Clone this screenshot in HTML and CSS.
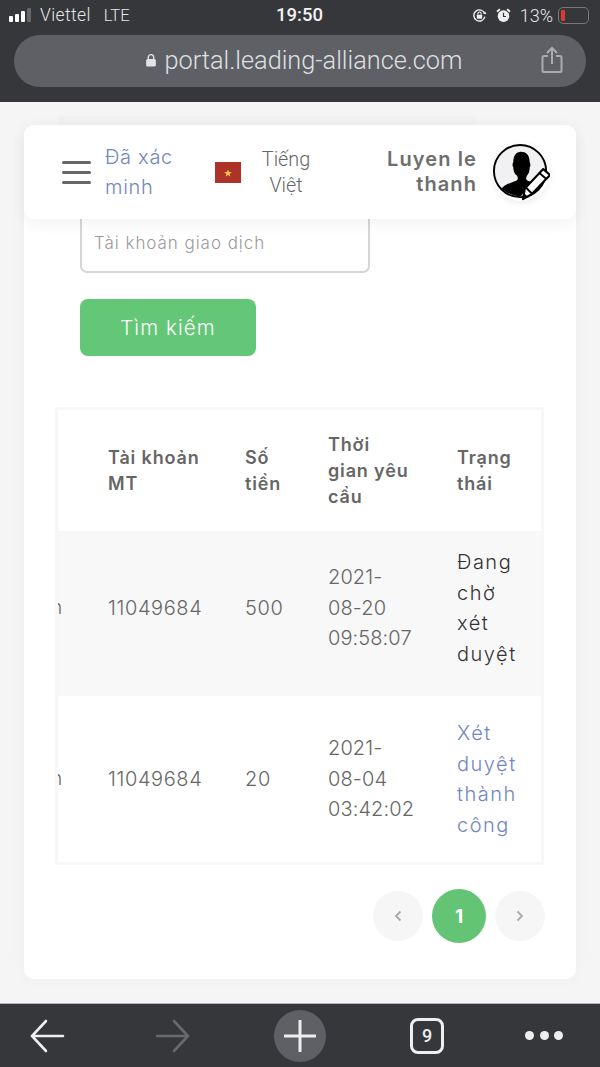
FILE: index.html
```html
<!DOCTYPE html>
<html lang="vi">
<head>
<meta charset="utf-8">
<title>Leading Alliance</title>
<link rel="stylesheet" href="styles.css">
</head>
<body>
<header class="browser-top">
  <div class="status">
    <div class="status-left">
      <span class="signal"><i></i><i></i><i></i><i class="off"></i></span>
      <span class="carrier">Viettel</span><span class="lte">LTE</span>
    </div>
    <div class="clock">19:50</div>
    <div class="status-right">
      <svg class="st-icon" viewBox="0 0 14 14"><path d="M11.8 5.2A5.2 5.2 0 1 0 12 8" fill="none" stroke="#eee" stroke-width="1.3"/><path d="M13.5 5.5l-3 .2 1.6-2.6z" fill="#eee"/><rect x="4.5" y="6.2" width="5" height="3.8" rx=".6" fill="#eee"/><path d="M5.5 6.4V5.2a1.5 1.5 0 0 1 3 0v1.2" fill="none" stroke="#eee"/></svg>
      <svg class="st-icon" viewBox="0 0 14 14"><circle cx="7" cy="7.6" r="5.4" fill="#eee"/><path d="M7 4.5v3.4h2.4" fill="none" stroke="#333" stroke-width="1.1"/><path d="M1 3.5L3.6 1M13 3.5L10.4 1" stroke="#eee" stroke-width="1.8"/></svg>
      <span class="pct">13%</span>
      <span class="battery"><i></i></span>
    </div>
  </div>
  <div class="urlbar">
    <svg class="lock" viewBox="0 0 11 13"><path d="M3 6V4a2.5 2.5 0 0 1 5 0v2" fill="none" stroke="#e2e3e5" stroke-width="1.3"/><rect x="1" y="5.5" width="9" height="7" rx="1.4" fill="#e2e3e5"/></svg>
    <span class="url">portal.leading-alliance.com</span>
    <svg class="share" viewBox="0 0 22 28"><path d="M7 10H3a1.5 1.5 0 0 0-1.500 1.500v13A1.500 1.500 0 0 0 3 26h16a1.500 1.500 0 0 0 1.500-1.500v-13A1.500 1.500 0 0 0 19 10h-4" fill="none" stroke="#a9abaf" stroke-width="2"/><path d="M11 18V2M6 7l5-5 5 5" fill="none" stroke="#a9abaf" stroke-width="2"/></svg>
  </div>
</header>

<main class="viewport">
  <div class="ghost-band"></div>
  <section class="card">
    <nav class="topnav">
      <div class="burger"><i></i><i></i><i></i></div>
      <a class="verified">Đã xác minh</a>
      <div class="lang">
        <span class="flag"><svg viewBox="0 0 10 10"><path d="M5 1.500l1 2.600 2.800.1-2.200 1.700.8 2.700L5 7l-2.400 1.600.8-2.700-2.200-1.700 2.800-.1z" fill="#f0c84a"/></svg></span>
        <span class="lang-name">Tiếng Việt</span>
      </div>
      <div class="user">
        <span class="user-name">Luyen le thanh</span>
        <span class="avatar">
          <svg viewBox="0 0 60 60">
            <circle cx="29" cy="29" r="27" fill="#f1f1f3" stroke="#000" stroke-width="2"/>
            <path d="M10 47c3-4 10-6 15-8 2-1 2-3 1-5-3-2-4-6-4-9-1-1-1-4 0-5 0-7 3-11 8-11s9 3 9 11c1 2 1 4 0 5 0 4-1 7-3 9-1 3-1 4 1 5l3 1-10 15c-8 0-15-3-20-8z" fill="#000"/>
            <path d="M32 58l2-11 19-20 7 6-19 20z" fill="#fff" stroke="#000" stroke-width="2.200" stroke-linejoin="round"/>
            <path d="M49 31l7 6M35 46l6 6" stroke="#000" stroke-width="2"/>
            <path d="M32 58l1-6 5 4z" fill="#000"/>
          </svg>
        </span>
      </div>
    </nav>

    <div class="card-body">
      <form class="search">
        <div class="field">Tài khoản giao dịch</div>
        <div class="btn">Tìm kiếm</div>
      </form>

      <div class="table-wrap">
        <table class="tbl">
          <thead>
            <tr class="head"><th class="c0"></th><th class="c1">Tài khoản<br>MT</th><th class="c2">Số<br>tiền</th><th class="c3">Thời<br>gian yêu<br>cầu</th><th class="c4">Trạng<br>thái</th></tr>
          </thead>
          <tbody>
            <tr class="odd"><td class="c0">n</td><td class="c1">11049684</td><td class="c2">500</td><td class="c3">2021-<br>08-20<br>09:58:07</td><td class="c4 pending">Đang<br>chờ<br>xét<br>duyệt</td></tr>
            <tr class="even"><td class="c0">n</td><td class="c1">11049684</td><td class="c2">20</td><td class="c3">2021-<br>08-04<br>03:42:02</td><td class="c4 ok">Xét<br>duyệt<br>thành<br>công</td></tr>
          </tbody>
        </table>
      </div>

      <div class="pager">
        <span class="pg"><svg viewBox="0 0 10 14"><path d="M7.500 2.500L3 7l4.500 4.500" fill="none" stroke="#aaa" stroke-width="1.800"/></svg></span>
        <span class="pg current">1</span>
        <span class="pg"><svg viewBox="0 0 10 14"><path d="M2.500 2.500L7 7l-4.500 4.500" fill="none" stroke="#aaa" stroke-width="1.800"/></svg></span>
      </div>
    </div>
  </section>
</main>

<footer class="browser-bottom">
  <svg class="tool" viewBox="0 0 36 36"><path d="M34 18H3M17 3L3 18l14 15" fill="none" stroke="#eeeeee" stroke-width="2.600" stroke-linecap="round"/></svg>
  <svg class="tool" viewBox="0 0 36 36"><path d="M2 18h31M19 3l14 15-14 15" fill="none" stroke="#68696c" stroke-width="2.600" stroke-linecap="round"/></svg>
  <span class="plus"><svg viewBox="0 0 32 32"><path d="M1 16h30M16 1v30" stroke="#eeeeee" stroke-width="3" stroke-linecap="round"/></svg></span>
  <span class="tabs">9</span>
  <span class="dots"><i></i><i></i><i></i></span>
</footer>
</body>
</html>
```
FILE: styles.css
```css
* { box-sizing: border-box; }
html, body { margin: 0; padding: 0; }
body {
  width: 600px; height: 1067px; overflow: hidden;
  display: flex; flex-direction: column;
  background: #f5f5f5;
  font-family: "Inter", "Liberation Sans", sans-serif;
  color: #666;
}
.browser-top { height: 102px; background: #36373b; padding: 0 14px; flex: none; }
.status {
  height: 35px; display: flex; align-items: center; justify-content: space-between;
  color: #e6e6e8; font-size: 16.500px; font-family: "Roboto", sans-serif; font-weight: 300; padding: 0 0 5px;
  position: relative;
}
.status-left { display: flex; align-items: center; gap: 7px; margin-left: -5px; }
.carrier { font-size: 17.500px; letter-spacing: .4px; margin-left: 1px; }
.lte { margin-left: 6px; font-size: 16.500px; }
.signal { display: flex; align-items: flex-end; gap: 2px; height: 14px; margin-right: 1px; }
.signal i { width: 4px; background: #fff; border-radius: 1px; display: block; }
.signal i:nth-child(1) { height: 6px; }
.signal i:nth-child(2) { height: 8px; }
.signal i:nth-child(3) { height: 11px; }
.signal i:nth-child(4) { height: 14px; }
.signal i.off { background: #66676a; }
.clock { position: absolute; left: 262px; font-size: 18.500px; font-weight: 500; color: #f2f2f2; }
.status-right { display: flex; align-items: center; gap: 5px; margin-right: -3px; }
.st-icon { width: 15px; height: 15px; margin-right: 4px; }
.pct { font-size: 18px; }
.battery { width: 31px; height: 17px; border: 1px solid #77787b; border-radius: 5px; padding: 2px; display: block; }
.battery i { display: block; width: 4px; height: 100%; background: #e0382d; border-radius: 1px; }
.urlbar {
  height: 52px; border-radius: 26px; background: #5e6065; display: flex; align-items: center;
  justify-content: center; position: relative; color: #dfe0e2; font-family: "Roboto", sans-serif; font-size: 25.300px;
  padding: 0 0 2px 7px;
}
.lock { width: 12px; height: 14px; margin-right: 8px; }
.url { font-weight: 300; }
.share { position: absolute; right: 23px; top: 11px; width: 22px; height: 28px; }

.viewport { flex: 1; min-height: 0; padding: 0 24px; position: relative; display: flex; flex-direction: column; }
.ghost-band { height: 23px; flex: none; padding: 14px 100px 0 34px; background-clip: content-box; background-color: #f2f2f2; }
.card { background: #fff; border-radius: 10px; height: 854px; box-shadow: 0 0 16px rgba(0,0,0,.035); }
.topnav {
  height: 94px; background: #fff; border-radius: 10px; display: flex; align-items: center; position: relative; z-index: 2;
  box-shadow: 0 5px 14px rgba(0,0,0,.05);
  padding: 0 26px 0 38px;
}
.burger { width: 29px; display: flex; flex-direction: column; gap: 7px; flex: none; }
.burger i { display: block; height: 3px; background: #666; border-radius: 2px; }
.verified { width: 90px; margin-left: 14px; color: #7186c1; font-size: 20px; line-height: 30px; flex: none; font-weight: 300; letter-spacing: .7px; }
.lang { display: flex; align-items: center; flex: none; margin-left: 20px; }
.flag { width: 26px; height: 21px; background: #ad3328; display: flex; align-items: center; justify-content: center; flex: none; margin-top: 1px; }
.flag svg { width: 10px; height: 10px; }
.lang-name { width: 76px; margin-left: 7px; padding-top: 2px; text-align: center; font-size: 19.800px; line-height: 26px; color: #666; font-family: "Roboto", sans-serif; font-weight: 300; }
.user { display: flex; align-items: center; margin-left: auto; }
.user-name { width: 110px; text-align: right; font-size: 20px; line-height: 25px; font-weight: 600; color: #6e6e6e; letter-spacing: 1.100px; }
.avatar { width: 58px; height: 58px; margin-left: 15px; flex: none; display: block; border-radius: 50%; box-shadow: 0 2px 6px rgba(0,0,0,.08); }
.avatar svg { display: block; width: 100%; height: 100%; }

.card-body { padding: 0 31px 0 31px; position: relative; }
.search { padding: 0 0 0 25px; }
.field {
  width: 290px; height: 54px; border: 1px solid #d6d6d6; border-width: 0 2px 2px 2px; border-radius: 0 0 7px 7px;
  color: #9a9a9a; font-size: 17px; font-weight: 300; letter-spacing: .95px; display: flex; align-items: center; padding: 0 12px 5px;
}
.btn {
  width: 176px; height: 57px; margin-top: 26px; background: #63c777; color: #fff; border-radius: 8px;
  display: flex; align-items: center; justify-content: center; font-size: 20.500px; font-weight: 300; letter-spacing: 1.100px;
}
.table-wrap { margin-top: 51px; width: 489px; border: 3px solid #f7f7f7; overflow: hidden; }
.tbl { border-collapse: collapse; table-layout: fixed; width: 483px; }
.tbl th, .tbl td { padding: 0; text-align: left; vertical-align: middle; }
.head { height: 121px; }
.tbl th { font-size: 18px; line-height: 26px; font-weight: 600; color: #666; letter-spacing: .85px; }
.tbl td { font-size: 20px; line-height: 30.500px; font-weight: 300; color: #666; letter-spacing: .6px; }
.odd { background: #f8f8f8; height: 165px; }
.odd td { padding-bottom: 11px; }
.even { height: 166px; }
.c0 { width: 50px; }
.tbl td.c0 { font-size: 19px; text-indent: -7px; }
.c1 { width: 137px; }
.c2 { width: 83px; }
.c3 { width: 129px; }
.c4 { width: 84px; }
.tbl td.c3 { letter-spacing: .1px; }
.tbl td.pending { color: #333; letter-spacing: 1.500px; }
.tbl td.ok { color: #7186c1; letter-spacing: 1.500px; }
.pager { display: flex; justify-content: flex-end; align-items: center; gap: 9px; margin-top: 24px; width: 490px; }
.pg { width: 50px; height: 50px; border-radius: 50%; background: #f6f6f6; display: flex; align-items: center; justify-content: center; }
.pg svg { width: 10px; height: 14px; }
.pg.current { width: 54px; height: 54px; background: #62c474; color: #fff; font-weight: 700; font-size: 19px; }

.browser-bottom {
  height: 64px; flex: none; background: #36373b; border-top: 1px solid #b5b5b5;
  display: grid; grid-template-columns: 94px 158px 96px 158px 76px; align-items: center; justify-items: center;
}
.tool { width: 36px; height: 36px; }
.plus { width: 52px; height: 52px; border-radius: 50%; background: #5e6065; display: flex; align-items: center; justify-content: center; }
.plus svg { width: 32px; height: 32px; }
.tabs { width: 34px; height: 36px; border: 3px solid #eee; border-radius: 8px; color: #eee; font-size: 18px; font-weight: 500; display: flex; align-items: center; justify-content: center; font-family: "Roboto", sans-serif; }
.dots { display: flex; gap: 5.500px; }
.dots i { width: 9px; height: 9px; border-radius: 50%; background: #eee; display: block; }
```
